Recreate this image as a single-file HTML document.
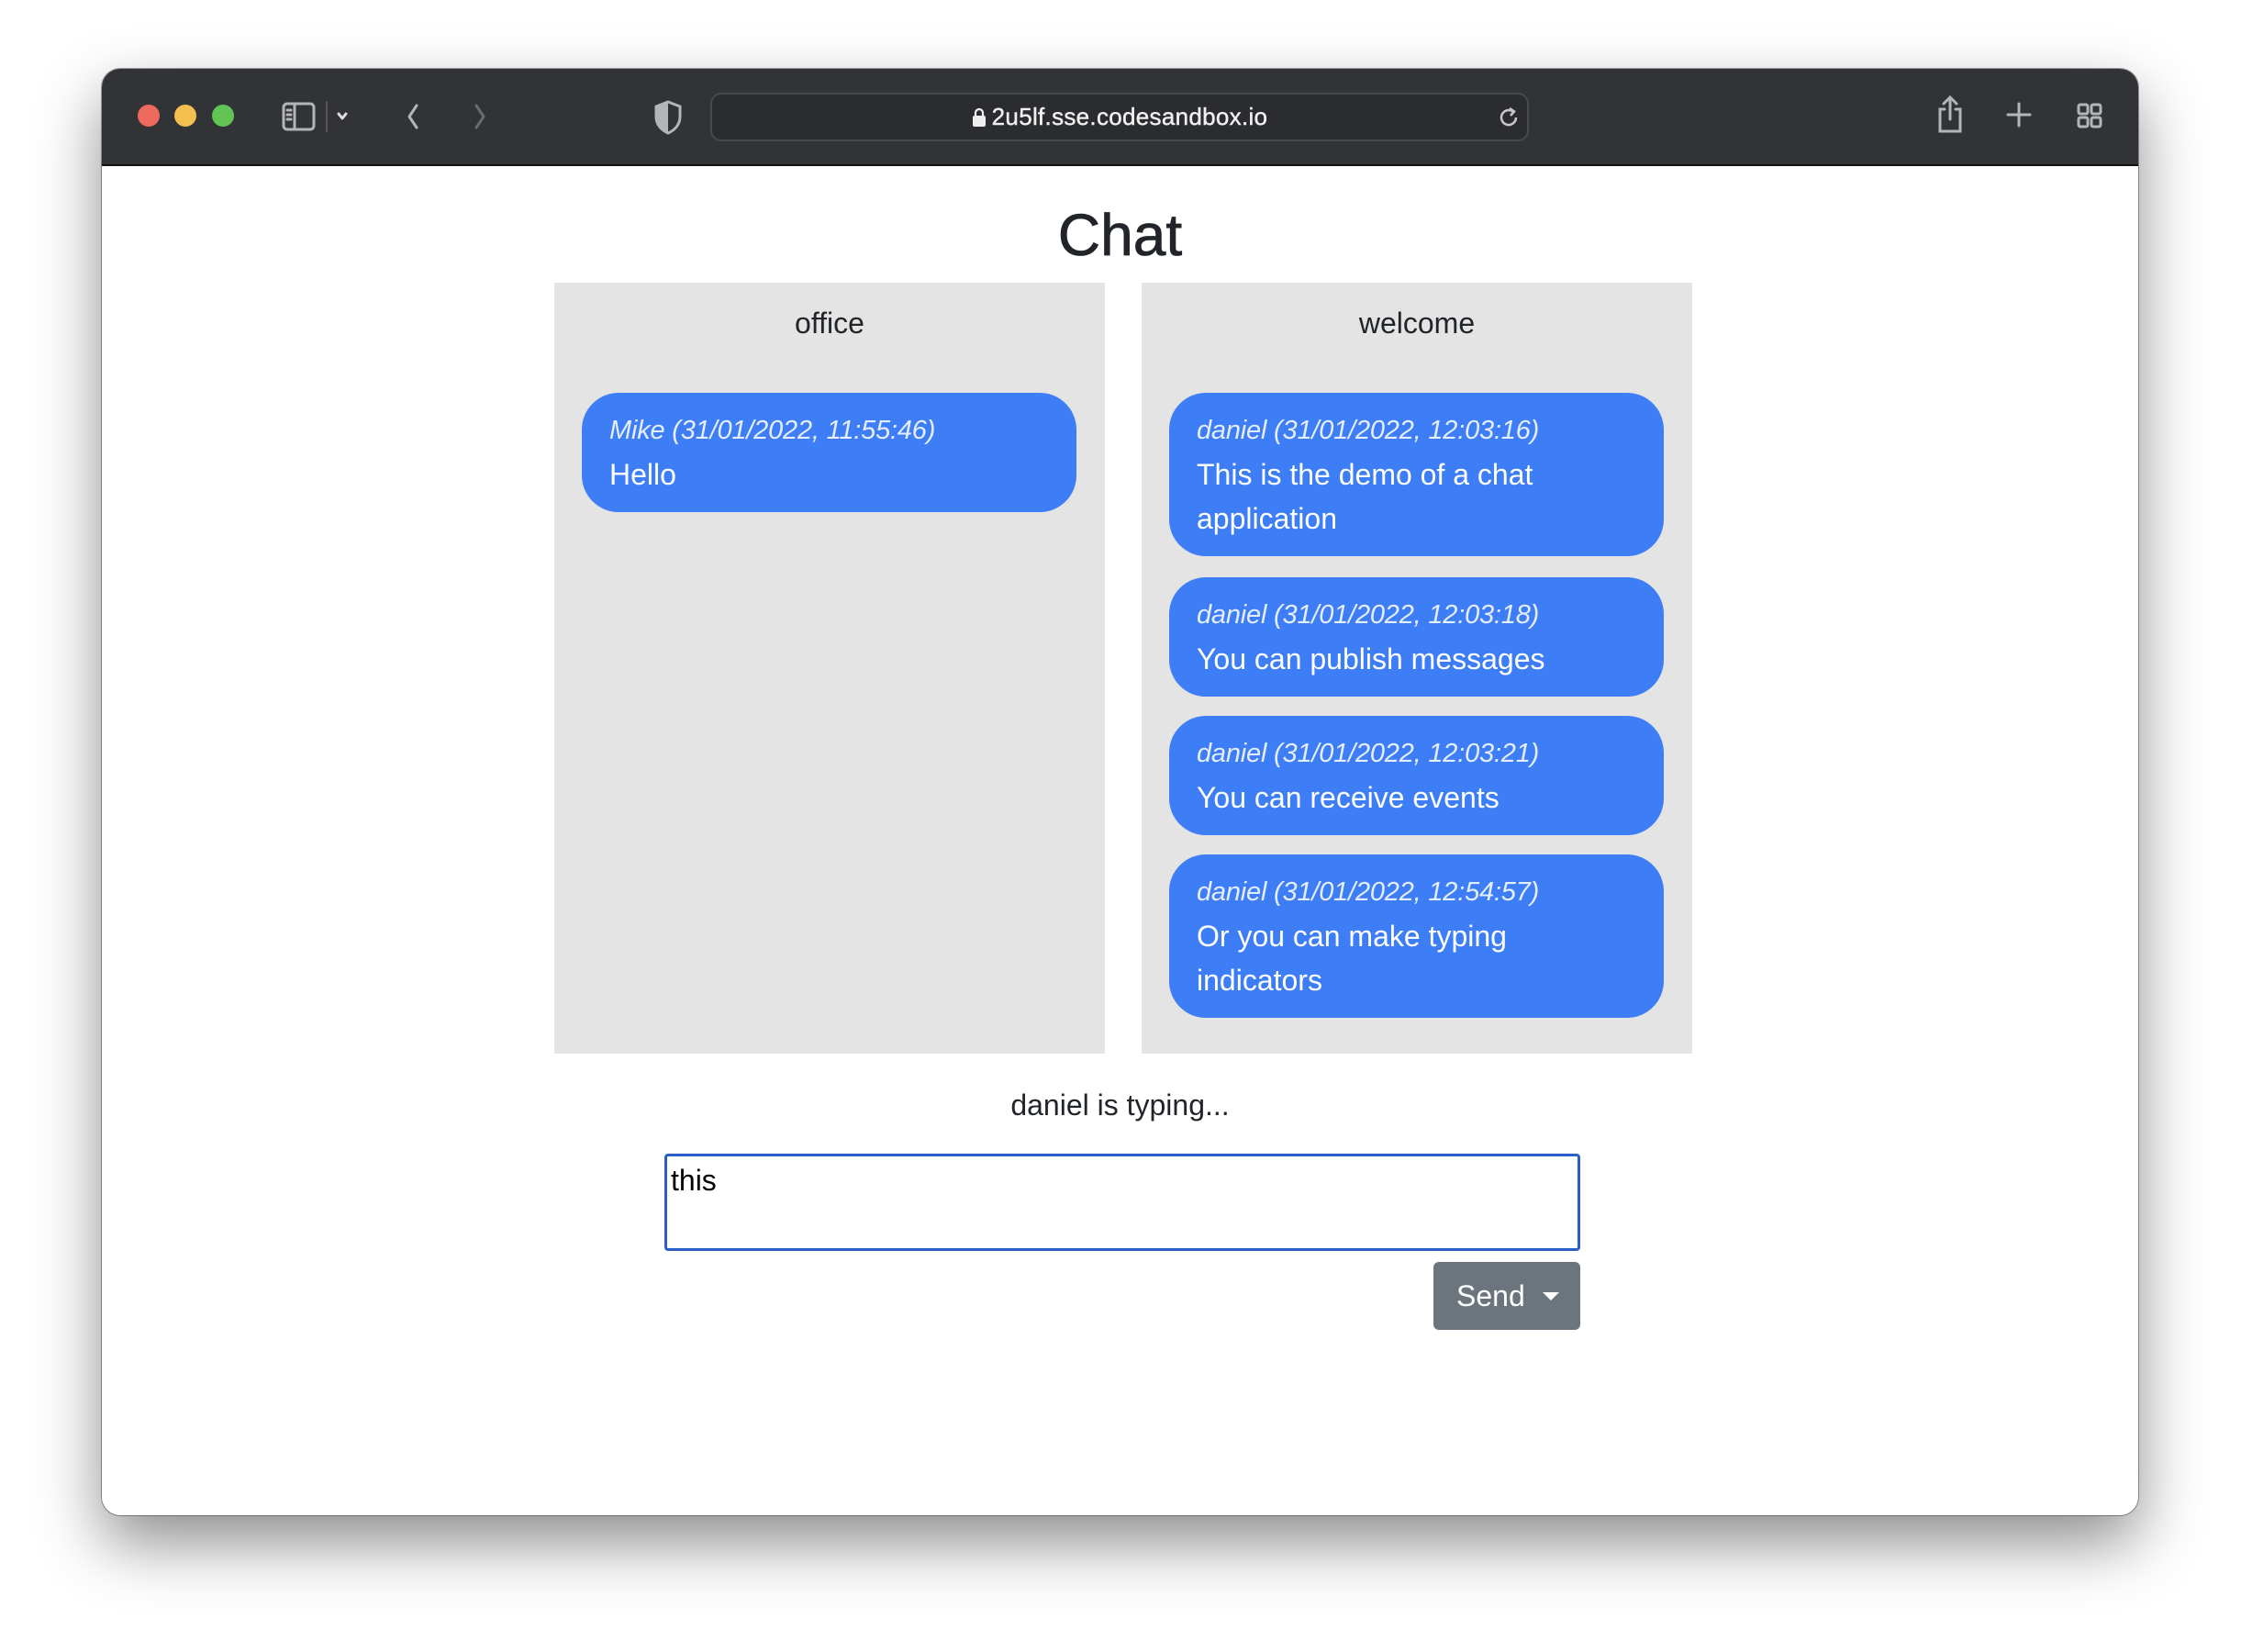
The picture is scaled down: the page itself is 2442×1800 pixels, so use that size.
<!DOCTYPE html>
<html><head><meta charset="utf-8"><style>
*{box-sizing:border-box;margin:0;padding:0}
body{width:2442px;height:1800px;background:#fff;position:relative;overflow:hidden;font-family:"Liberation Sans",Helvetica,Arial,sans-serif}
.win{position:absolute;left:111px;top:75px;width:2219px;height:1576px;border-radius:20px;background:#fff;box-shadow:0 30px 70px rgba(0,0,0,.45),0 0 0 1px rgba(0,0,0,.35);overflow:hidden}
.bar{position:absolute;left:0;top:0;width:100%;height:106px;background:#323336;border-bottom:2px solid #111}
.dot{position:absolute;top:39px;width:24px;height:24px;border-radius:50%}
.url{position:absolute;left:663px;top:26px;width:892px;height:53px;border:2px solid #48494c;border-radius:12px;background:#2b2c2f;color:#f0f0f0;font-size:26px;text-align:center;line-height:49px;letter-spacing:0.3px;-webkit-text-stroke:0.4px #f0f0f0}
.abs{position:absolute}
h1{position:absolute;left:0;width:100%;top:144px;text-align:center;font-size:64px;font-weight:400;color:#212529;-webkit-text-stroke:0.8px #212529}
.panel{position:absolute;top:233px;width:600px;height:840px;background:#e4e4e4}
.ptitle{position:absolute;top:20px;width:100%;text-align:center;font-size:32px;line-height:48px;color:#212529}
.b{position:absolute;left:30px;width:539px;background:#3d7ef6;border-radius:40px;padding:17px 30px;color:#fff;font-size:32px;line-height:48px}
.b i{color:#e6edff;display:block;font-size:29px;letter-spacing:-0.2px}
.typing{position:absolute;top:1105px;width:100%;text-align:center;font-size:32px;color:#212529;line-height:48px}
.ta{position:absolute;left:613px;top:1182px;width:998px;height:106px;border:3px solid #2a5ec8;border-radius:4px;font-size:32px;color:#000;padding:6px 4px;line-height:40px}
.btn{position:absolute;left:1451px;top:1300px;width:160px;height:74px;background:#6c757d;border-radius:6px;color:#fff;font-size:32px;line-height:74px;padding-left:25px}
</style></head><body>
<div class="win">
<div class="bar">
<div class="dot" style="left:39px;background:#ee6a5e"></div>
<div class="dot" style="left:79px;background:#f5bf4f"></div>
<div class="dot" style="left:120px;background:#61c454"></div>
<svg class="abs" style="left:195px;top:32px" width="280" height="40" viewBox="0 0 280 40" fill="none" stroke="#b4b5b8" stroke-width="3" stroke-linecap="round" stroke-linejoin="round">
<rect x="3" y="6" width="33" height="28" rx="4"/><line x1="15" y1="6" x2="15" y2="34"/><line x1="7" y1="13" x2="11" y2="13"/><line x1="7" y1="18" x2="11" y2="18"/><line x1="7" y1="23" x2="11" y2="23"/>
<line x1="50" y1="4" x2="50" y2="36" stroke="#555" stroke-width="2"/>
<polyline points="63,17 67,22 71,17" stroke="#ddd"/>
<polyline points="148,8 140,20 148,32"/>
<polyline points="213,8 221,20 213,32" stroke="#6b6c6f"/>
</svg>
<svg class="abs" style="left:600px;top:34px" width="34" height="38" viewBox="0 0 34 38"><path d="M17 2 L30 7 V18 C30 27 24 33 17 36 C10 33 4 27 4 18 V7 Z" fill="none" stroke="#b4b5b8" stroke-width="3"/><path d="M17 2 L4 7 V18 C4 27 10 33 17 36 Z" fill="#b4b5b8"/></svg>
<div class="url"><svg width="16" height="22" viewBox="0 0 16 22" style="vertical-align:-3px;margin-right:6px"><path d="M4 10 V6 a4 4 0 0 1 8 0 V10" fill="none" stroke="#eee" stroke-width="2.2"/><rect x="1" y="9" width="14" height="12" rx="2" fill="#eee"/></svg>2u5lf.sse.codesandbox.io</div>
<svg class="abs" style="left:1520px;top:40px" width="26" height="26" viewBox="0 0 26 26" fill="none" stroke="#c8c8c8" stroke-width="2.5"><path d="M21 13a8 8 0 1 1-3-6.2"/><polyline points="14,3 19,6.5 15,11"/></svg>
<svg class="abs" style="left:1995px;top:28px" width="240" height="44" viewBox="0 0 240 44" fill="none" stroke="#b4b5b8" stroke-width="3" stroke-linecap="round">
<path d="M13 16 H8 V40 H30 V16 H25"/><line x1="19" y1="4" x2="19" y2="27"/><polyline points="12,10 19,3 26,10"/>
<line x1="94" y1="10" x2="94" y2="34"/><line x1="82" y1="22" x2="106" y2="22"/>
<rect x="159" y="11" width="10" height="10" rx="2"/><rect x="173" y="11" width="10" height="10" rx="2"/><rect x="159" y="25" width="10" height="10" rx="2"/><rect x="173" y="25" width="10" height="10" rx="2"/>
</svg>
</div>
<h1>Chat</h1>
<div class="panel" style="left:493px">
<div class="ptitle">office</div>
<div class="b" style="top:120px"><i>Mike (31/01/2022, 11:55:46)</i>Hello</div>
</div>
<div class="panel" style="left:1133px">
<div class="ptitle">welcome</div>
<div class="b" style="top:120px"><i>daniel (31/01/2022, 12:03:16)</i>This is the demo of a chat application</div>
<div class="b" style="top:321px"><i>daniel (31/01/2022, 12:03:18)</i>You can publish messages</div>
<div class="b" style="top:472px"><i>daniel (31/01/2022, 12:03:21)</i>You can receive events</div>
<div class="b" style="top:623px"><i>daniel (31/01/2022, 12:54:57)</i>Or you can make typing indicators</div>
</div>
<div class="typing">daniel is typing...</div>
<div class="ta">this</div>
<div class="btn">Send <span style="display:inline-block;width:0;height:0;border-left:9px solid transparent;border-right:9px solid transparent;border-top:9px solid #fff;vertical-align:6px;margin-left:10px"></span></div>
</div>
</body></html>
